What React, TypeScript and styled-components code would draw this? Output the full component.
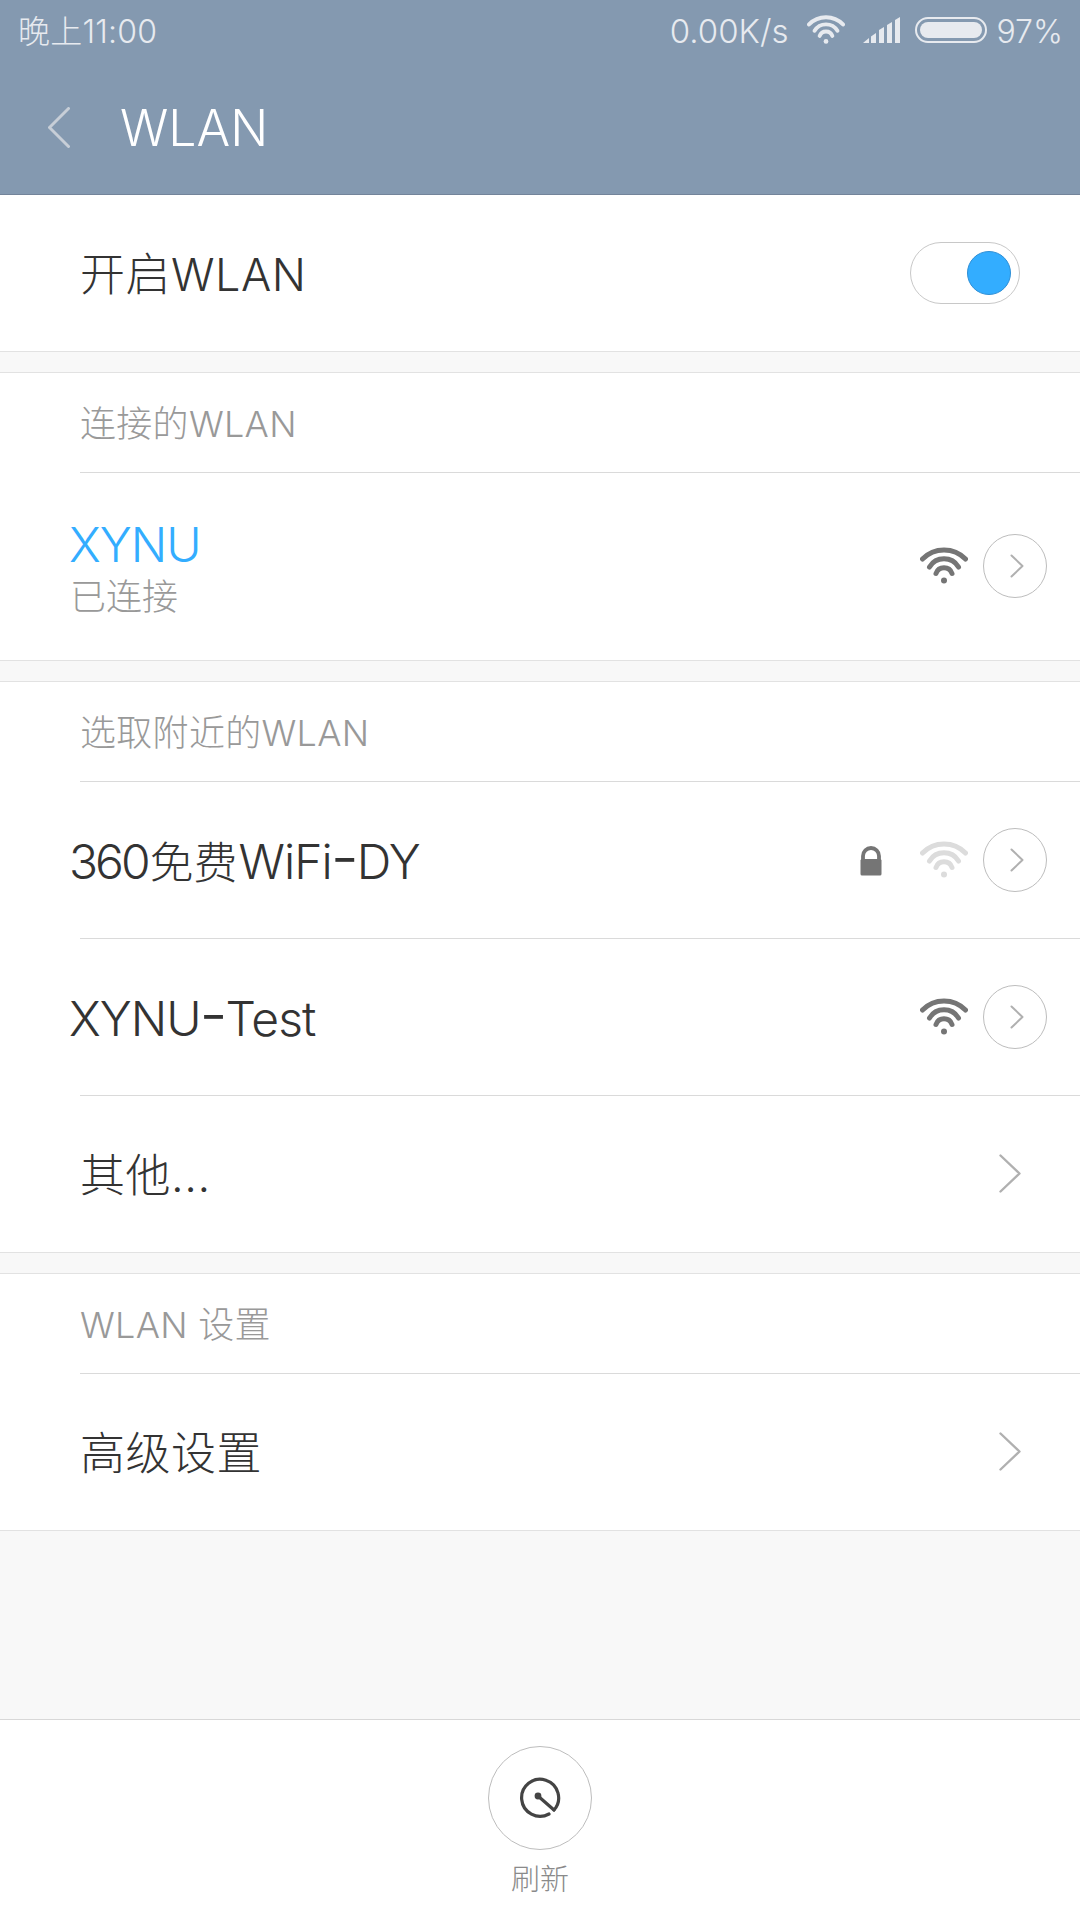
import React from "react";
import styled, { createGlobalStyle } from "styled-components";

const FONT = `Inter, "Noto Sans CJK SC", sans-serif`;

const GlobalStyle = createGlobalStyle`
  html, body {
    margin: 0;
    padding: 0;
    background: #f8f8f8;
  }
  * {
    box-sizing: border-box;
  }
`;

const WifiIcon = ({ color }: { color: string }) => (
  <svg width="48" height="38" viewBox="0 0 48 38" fill="none" stroke={color} strokeWidth="5" strokeLinecap="round">
    <path d="M2.5 12 A30 30 0 0 1 45.5 12" />
    <path d="M9.5 20 A17 17 0 0 1 38.5 20" />
    <path d="M16 26.5 A8.5 8.5 0 0 1 32 26.5" />
    <circle cx="24" cy="33.5" r="3" fill={color} stroke="none" />
  </svg>
);

const Chevron = ({ w, h, color, width, left }: { w: number; h: number; color: string; width: number; left?: boolean }) => (
  <svg width={w} height={h} viewBox={`0 0 ${w} ${h}`} fill="none" stroke={color} strokeWidth={width} strokeLinecap="round" strokeLinejoin="round">
    {left ? (
      <path d={`M${w - 1.5} 1.5 L1.5 ${h / 2} L${w - 1.5} ${h - 1.5}`} />
    ) : (
      <path d={`M1.5 1.5 L${w - 1.5} ${h / 2} L1.5 ${h - 1.5}`} />
    )}
  </svg>
);

const Lock = () => (
  <svg width="22" height="30" viewBox="0 0 22 30">
    <path d="M3 14 V10 A8 8 0 0 1 19 10 V14" fill="none" stroke="#757575" strokeWidth="3.8" />
    <rect x="0.5" y="13" width="21" height="16.5" rx="1.5" fill="#757575" />
  </svg>
);

const SignalBars = () => (
  <svg width="37" height="26" viewBox="0 0 37 26" fill="#e7eaef">
    <path d="M0 26 L6 21 V26 Z" />
    <path d="M8 19.5 L13 16 V26 H8 Z" />
    <path d="M16 13 L21 10 V26 H16 Z" />
    <path d="M24 8 L29 5 V26 H24 Z" />
    <path d="M32 3 L37 0 V26 H32 Z" />
  </svg>
);

const Battery = () => (
  <svg width="72" height="26" viewBox="0 0 72 26">
    <rect x="1" y="1" width="70" height="24" rx="12" fill="none" stroke="#e7eaef" strokeWidth="2" />
    <rect x="5" y="5" width="62" height="16" rx="8" fill="#e7eaef" />
  </svg>
);

const RefreshIcon = () => (
  <svg width="44" height="44" viewBox="0 0 44 44" fill="none" stroke="#444" strokeWidth="3.2" strokeLinecap="round">
    <path d="M36 34 A18.5 18.5 0 1 0 31 38" />
    <path d="M20 20 L36 34" />
    <circle cx="20" cy="20" r="3.4" fill="#444" stroke="none" />
  </svg>
);

const App = () => (
  <Page>
    <GlobalStyle />
    <Header>
      <StatusBar>
        <Clock>晚上11:00</Clock>
        <StatusRight>
          <Speed>0.00K/s</Speed>
          <StatusWifi>
            <WifiIcon color="#e7eaef" />
          </StatusWifi>
          <SignalBars />
          <Battery />
          <Percent>97%</Percent>
        </StatusRight>
      </StatusBar>
      <TitleBar>
        <Chevron w={22} h={41} color="#c7ced7" width={3} left />
        <Title>WLAN</Title>
      </TitleBar>
    </Header>

    <Content>
      <Group>
        <PlainRow>
          <RowLabel>开启WLAN</RowLabel>
          <Toggle>
            <Knob />
          </Toggle>
        </PlainRow>
      </Group>

      <Group>
        <SectionHead>连接的WLAN</SectionHead>
        <WifiRow $tall>
          <NameBlock>
            <WifiName $active>XYNU</WifiName>
            <WifiStatus>已连接</WifiStatus>
          </NameBlock>
          <RowActions>
            <WifiIcon color="#757575" />
            <CircleArrow>
              <Chevron w={14} h={24} color="#b0b0b0" width={2} />
            </CircleArrow>
          </RowActions>
        </WifiRow>
      </Group>

      <Group>
        <SectionHead>选取附近的WLAN</SectionHead>
        <WifiRow>
          <NameBlock>
            <WifiName>
              <Digits>360</Digits>
              <Cjk>免费</Cjk>WiFi<Dash>-</Dash>DY
            </WifiName>
          </NameBlock>
          <RowActions>
            <LockSlot>
              <Lock />
            </LockSlot>
            <WifiIcon color="#dcdcdc" />
            <CircleArrow>
              <Chevron w={14} h={24} color="#b0b0b0" width={2} />
            </CircleArrow>
          </RowActions>
        </WifiRow>
        <Divider />
        <WifiRow>
          <NameBlock>
            <WifiName>
              XYNU<Dash>-</Dash>Test
            </WifiName>
          </NameBlock>
          <RowActions>
            <WifiIcon color="#757575" />
            <CircleArrow>
              <Chevron w={14} h={24} color="#b0b0b0" width={2} />
            </CircleArrow>
          </RowActions>
        </WifiRow>
        <Divider />
        <PlainRow>
          <RowLabel>其他...</RowLabel>
          <BigArrow>
            <Chevron w={22} h={39} color="#b0b0b0" width={2.4} />
          </BigArrow>
        </PlainRow>
      </Group>

      <Group>
        <SectionHead>WLAN 设置</SectionHead>
        <PlainRow>
          <RowLabel>高级设置</RowLabel>
          <BigArrow>
            <Chevron w={22} h={39} color="#b0b0b0" width={2.4} />
          </BigArrow>
        </PlainRow>
      </Group>
    </Content>

    <BottomBar>
      <RefreshButton>
        <RefreshIcon />
      </RefreshButton>
      <RefreshLabel>刷新</RefreshLabel>
    </BottomBar>
  </Page>
);

const Page = styled.div`
  width: 1080px;
  height: 1920px;
  display: flex;
  flex-direction: column;
  overflow: hidden;
  background: #f8f8f8;
  font-family: ${FONT};
`;

const Header = styled.header`
  height: 195px;
  background: #8499b0;
  border-bottom: 1px solid #73849a;
`;

const StatusBar = styled.div`
  height: 60px;
  padding: 0 17px 0 18px;
  display: flex;
  align-items: center;
  justify-content: space-between;
`;

const StatusRight = styled.div`
  display: flex;
  align-items: center;
  gap: 15px;
`;

const StatusText = styled.span`
  font-size: 33px;
  font-weight: 300;
  color: #e7eaef;
`;

const Clock = styled(StatusText)`
  font-size: 32px;
  letter-spacing: 0.2px;
  margin-top: -2px;
`;

const Speed = styled(StatusText)`
  margin: 2px 4px 0 0;
`;

const Percent = styled(StatusText)`
  margin: 2px 0 0 -6px;
  font-size: 32px;
`;

const StatusWifi = styled.span`
  display: flex;
  width: 38px;
  height: 30px;
  margin-right: 3px;
  svg {
    width: 38px;
    height: 30px;
  }
`;

const TitleBar = styled.div`
  height: 134px;
  padding-left: 48px;
  display: flex;
  align-items: center;
  gap: 50px;
`;

const Title = styled.h1`
  margin: 2px 0 0;
  font-size: 50px;
  font-weight: 300;
  color: #fff;
`;

const Content = styled.main`
  flex: 1;
  display: flex;
  flex-direction: column;
  gap: 20px;
`;

const Group = styled.section`
  background: #fff;
  border-top: 1px solid #e2e2e2;
  border-bottom: 1px solid #e2e2e2;
  &:first-child {
    border-top: 0;
  }
`;

const PlainRow = styled.div`
  height: 156px;
  padding: 0 60px 0 80px;
  display: flex;
  align-items: center;
  justify-content: space-between;
`;

const RowLabel = styled.span`
  font-size: 45px;
  font-weight: 300;
  letter-spacing: 0.5px;
  color: #333;
  margin-top: -4px;
`;

const Toggle = styled.div`
  width: 110px;
  height: 62px;
  border: 1.5px solid #c8c8c8;
  border-radius: 31px;
  display: flex;
  align-items: center;
  justify-content: flex-end;
  padding-right: 8px;
`;

const Knob = styled.div`
  width: 44px;
  height: 44px;
  border-radius: 50%;
  background: #33adff;
  border: 1px solid #2e8fd6;
`;

const SectionHead = styled.h2`
  margin: 0 0 0 80px;
  height: 100px;
  padding-bottom: 4px;
  display: flex;
  align-items: center;
  font-size: 36px;
  font-weight: 300;
  letter-spacing: 0.3px;
  color: #999;
  border-bottom: 1px solid #dadada;
`;

const WifiRow = styled.div<{ $tall?: boolean }>`
  height: ${(p) => (p.$tall ? 187 : 156)}px;
  padding: 0 33px ${(p) => (p.$tall ? 2 : 0)}px 69px;
  display: flex;
  align-items: center;
  justify-content: space-between;
`;

const NameBlock = styled.div`
  margin-top: 4px;
`;

const WifiName = styled.div<{ $active?: boolean }>`
  font-size: 48px;
  font-weight: 300;
  line-height: 58px;
  letter-spacing: -1px;
  color: ${(p) => (p.$active ? "#33adff" : "#333")};
`;

const Digits = styled.span`
  letter-spacing: -3px;
`;

const Cjk = styled.span`
  font-size: 44px;
  letter-spacing: 0;
  margin: 0 1px 0 2px;
`;

const Dash = styled.span`
  font-size: 62px;
  line-height: 0;
  margin: 0 -1px;
`;

const WifiStatus = styled.div`
  font-size: 36px;
  font-weight: 300;
  line-height: 46px;
  margin-left: 1px;
  color: #999;
`;

const RowActions = styled.div`
  display: flex;
  align-items: center;
  gap: 15px;
`;

const LockSlot = styled.span`
  display: flex;
  margin: 2px 23px 0 0;
`;

const CircleArrow = styled.div`
  width: 64px;
  height: 64px;
  border: 1.5px solid #bdbdbd;
  border-radius: 50%;
  display: flex;
  align-items: center;
  justify-content: center;
  padding-left: 4px;
`;

const BigArrow = styled.span`
  display: flex;
  margin: -2px -1px 0 0;
`;

const Divider = styled.div`
  margin-left: 80px;
  height: 1px;
  background: #dadada;
`;

const BottomBar = styled.footer`
  height: 201px;
  background: #fff;
  border-top: 1px solid #d8d8d8;
  display: flex;
  flex-direction: column;
  align-items: center;
  padding-top: 26px;
`;

const RefreshButton = styled.div`
  width: 104px;
  height: 104px;
  border: 1.5px solid #bdbdbd;
  border-radius: 50%;
  display: flex;
  align-items: center;
  justify-content: center;
`;

const RefreshLabel = styled.div`
  margin-top: 6px;
  font-size: 29px;
  font-weight: 300;
  color: #8a8a8a;
`;

export default App;
